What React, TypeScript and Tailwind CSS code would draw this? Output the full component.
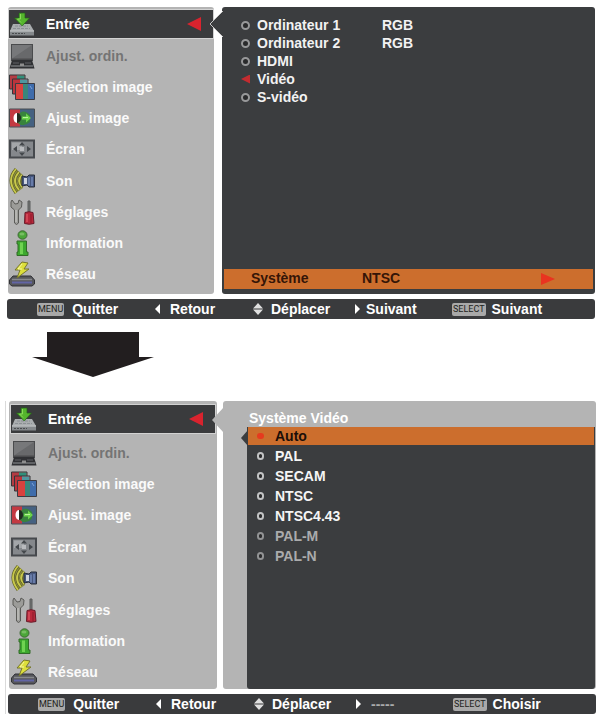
import type { ReactNode } from "react";

const InputIcon = () => (
  <svg viewBox="0 0 26 26" className="h-[26px] w-[26px]" aria-hidden="true">
    <path d="M4 13H21L25 20H1Z" fill="#a9adaf" />
    <path d="M6 15H19M4 17.500H21" stroke="#8b9094" strokeWidth="1" strokeDasharray="3 1" />
    <path d="M1 19.500H25V24.500H1Z" fill="#85898c" />
    <path d="M1 20H25" stroke="#d0d3d4" />
    <path d="M3 22.500H16" stroke="#4b4e50" strokeDasharray="2 1" />
    <path d="M10 2H16V7H20.500L13.200 15L5.500 7H10Z" fill="#55b52d" stroke="#24611a" strokeWidth="0.700" />
    <path d="M11.500 3V8H8.500L12 11.500" stroke="#8bd95c" fill="none" />
  </svg>
);

const LaptopIcon = () => (
  <svg viewBox="0 0 26 26" className="h-[26px] w-[26px]" aria-hidden="true">
    <path d="M2 1H24V18H2Z" fill="#4a4b4d" />
    <path d="M3 2H23V15.500H3Z" fill="#68696b" />
    <path d="M3 2H23L3 15.500Z" fill="#77787a" />
    <path d="M3 17H23L25.500 25.500H0.500Z" fill="#303134" />
    <path d="M4 20H10M16 20H22" stroke="#5f6164" strokeWidth="1" />
    <path d="M2 23H24" stroke="#606265" strokeWidth="2" />
    <path d="M11 20.500H15V23H11Z" fill="#8e8e8e" />
  </svg>
);

const PicturesIcon = () => (
  <svg viewBox="0 0 26 26" className="h-[26px] w-[26px]" aria-hidden="true">
    <path d="M0.500 1H16V15H0.500Z" fill="#b43b43" stroke="#343539" />
    <path d="M8 1.500H15.500V5H8Z" fill="#318f7a" />
    <path d="M3.500 5H19V20H3.500Z" fill="#bc343c" stroke="#343539" />
    <path d="M11 5.500H18.500V11H11Z" fill="#4f97a0" />
    <path d="M6.500 9.500H25.500V25.500H6.500Z" fill="#3f6cab" stroke="#3b3b43" />
    <path d="M7 10H14V25H7Z" fill="#d8423e" />
    <path d="M14 10H19V25H14Z" fill="#39867b" />
    <path d="M21 12L23 15" stroke="#7ba3dc" fill="none" />
  </svg>
);

const AdjustIcon = () => (
  <svg viewBox="0 0 26 26" className="h-[26px] w-[26px]" aria-hidden="true">
    <path d="M0.500 4H25.500V22H0.500Z" fill="#456181" stroke="#494c50" />
    <path d="M1 4.500H11V21.500H1Z" fill="#c33a42" />
    <path d="M9 10Q14 3 21 10V17Q14 23 9 18Z" fill="#38833d" />
    <path d="M8 8A3.500 5 0 0 0 8 18Z" fill="#fff" />
    <path d="M8 8A4 5 0 0 1 8 18Z" fill="#202b20" />
    <path d="M13 11.500H17V8.500L22 13L17 17.500V14.500H13Z" fill="#6bd34b" />
    <path d="M14 12.500H19" stroke="#b8f59a" />
  </svg>
);

const ScreenIcon = () => (
  <svg viewBox="0 0 26 26" className="h-[26px] w-[26px]" aria-hidden="true">
    <path d="M1 4.500H25V21.500H1Z" fill="#85888c" stroke="#46494d" strokeWidth="2" />
    <path d="M3 6.500H13V14H3Z" fill="#a3a6a9" />
    <path d="M4 13L8 10V16ZM22 13L18 10V16ZM13 6L10 9.500H16ZM13 20L10 16.500H16Z" fill="#44484c" />
    <path d="M11 11H15V15H11Z" fill="#b9bbbe" />
  </svg>
);

const SoundIcon = () => (
  <svg viewBox="0 0 26 26" className="h-[26px] w-[26px]" aria-hidden="true">
    <path d="M7 1Q-3 12 7 25L14 20V7Z" fill="#8c8d45" />
    <g fill="none" stroke="#5b5e21" strokeWidth="3">
      <path d="M7 1Q-3 12 7 25M10 4Q2 13 10 22M13 7Q7 13 13 19" />
    </g>
    <g fill="none" stroke="#c9c94c" strokeWidth="1.800">
      <path d="M7 1Q-3 12 7 25M10 4Q2 13 10 22M13 7Q7 13 13 19" />
    </g>
    <path d="M13 8L18 9L20 7H25.500V19H20L18 17L13 18Z" fill="#48587e" stroke="#292e3b" />
    <path d="M15 10H18V16H15Z" fill="#ced4df" />
    <path d="M20 9.500V17.500M23 9V18" stroke="#7388b8" strokeWidth="1.500" />
  </svg>
);

const ToolsIcon = () => (
  <svg viewBox="0 0 26 26" className="h-[26px] w-[26px]" aria-hidden="true">
    <path d="M3 1L6 5L9 4.500L10 1L13 3L12.500 8L9.500 11V24Q7.500 27 5.500 24V11L2 8V3Z" fill="#9c9c99" stroke="#5a5a57" />
    <path d="M7 11V23" stroke="#cfcfcb" />
    <path d="M19 2H21V13H19Z" fill="#737473" stroke="#5a5c5d" />
    <path d="M16 13.500Q20 12 24 13.500L25 24.500Q20 26 15.500 24.500Z" fill="#b8283b" stroke="#681c2a" />
    <path d="M18 15V23" stroke="#d9505f" strokeWidth="1.500" />
    <path d="M22 15V24" stroke="#8b1a2a" strokeWidth="1" />
  </svg>
);

const InfoIcon = () => (
  <svg viewBox="0 0 26 26" className="h-[26px] w-[26px]" aria-hidden="true">
    <ellipse cx="13.500" cy="5" rx="4.500" ry="4.200" fill="#4ba638" stroke="#3e6834" />
    <ellipse cx="13" cy="4" rx="2.500" ry="1.500" fill="#78bd63" />
    <path d="M8 11H17.500V22H19V25.500H8V22H9V14H8Z" fill="#3ca82e" stroke="#326b28" />
    <path d="M12.500 12.500V24" stroke="#6fd351" strokeWidth="3" />
  </svg>
);

const NetworkIcon = () => (
  <svg viewBox="0 0 26 26" className="h-[26px] w-[26px]" aria-hidden="true">
    <path d="M4 15H22L25.500 19V23L23 25H3L0.500 23V19Z" fill="#56575b" stroke="#303136" />
    <path d="M3 18.500H23" stroke="#88898d" strokeWidth="1.500" />
    <path d="M3 21.500H23" stroke="#6265a5" strokeWidth="2" />
    <path d="M13 1L6 9H11L8 17L20 8H15L19 2Z" fill="#dddf3c" stroke="#77772c" />
    <path d="M13 3L9 8H13" stroke="#f8f8a4" fill="none" />
  </svg>
);

const MENU = [
  { label: "Ajust. ordin.", icon: <LaptopIcon />, disabled: true },
  { label: "Sélection image", icon: <PicturesIcon /> },
  { label: "Ajust. image", icon: <AdjustIcon /> },
  { label: "Écran", icon: <ScreenIcon /> },
  { label: "Son", icon: <SoundIcon /> },
  { label: "Réglages", icon: <ToolsIcon /> },
  { label: "Information", icon: <InfoIcon /> },
  { label: "Réseau", icon: <NetworkIcon /> },
];

function Sidebar({ className, listClassName }: { className: string; listClassName: string }) {
  return (
    <nav aria-label="Menu" className={`flex shrink-0 flex-col rounded-[3px] bg-[#b4b4b4] ${className}`}>
      <button className="flex h-7 w-full items-center gap-[11px] bg-[#3a3b3d] pr-3 text-left text-white outline-1 outline-[#d2d2d2]">
        <InputIcon />
        <span className="flex-1">Entrée</span>
        <svg viewBox="0 0 14 14" className="h-[14px] w-[14px]" aria-hidden="true">
          <path d="M0 7L14 0V14Z" fill="#d9232e" />
        </svg>
      </button>
      <ul className={`grid flex-1 auto-rows-fr ${listClassName}`}>
        {MENU.map((item) => (
          <li key={item.label} className="flex">
            <button
              disabled={item.disabled}
              className="flex w-full items-center gap-[11px] text-left text-[#fafafa] disabled:text-[#747474]"
            >
              {item.icon}
              <span>{item.label}</span>
            </button>
          </li>
        ))}
      </ul>
    </nav>
  );
}

const Badge = ({ children }: { children: ReactNode }) => (
  <span className="rounded-[2px] bg-[#a9a9a9] px-px font-['Roboto',sans-serif] text-[9px] leading-[13px] font-normal text-[#1e1f20]">
    {children}
  </span>
);

const Left = () => (
  <svg viewBox="0 0 5 10" className="h-[10px] w-[5px]" aria-hidden="true">
    <path d="M0 5L5 0V10Z" fill="#fff" />
  </svg>
);

const Right = () => (
  <svg viewBox="0 0 5 10" className="h-[10px] w-[5px]" aria-hidden="true">
    <path d="M5 5L0 0V10Z" fill="#fff" />
  </svg>
);

const UpDown = () => (
  <svg viewBox="0 0 10 12" className="h-3 w-[10px]" aria-hidden="true">
    <path d="M0 5.500L5 0L10 5.500ZM0 6.500L5 12L10 6.500Z" fill="#e0e0e0" />
  </svg>
);

function Footer({ next, select }: { next: ReactNode; select: string }) {
  const item = "flex items-center whitespace-nowrap";
  return (
    <footer className="grid h-5 grid-cols-[118fr_98fr_102fr_97fr_143fr] rounded-[3px] bg-[#3a3b3d] pl-[30px] text-white">
      <button className={`${item} gap-2`}><Badge>MENU</Badge>Quitter</button>
      <button className={`${item} gap-[10px]`}><Left />Retour</button>
      <button className={`${item} gap-2`}><UpDown />Déplacer</button>
      <button className={`${item} gap-[6px]`}><Right />{next}</button>
      <button className={`${item} gap-[6px]`}><Badge>SELECT</Badge>{select}</button>
    </footer>
  );
}

const SOURCES = [
  { label: "Ordinateur 1", signal: "RGB" },
  { label: "Ordinateur 2", signal: "RGB" },
  { label: "HDMI" },
  { label: "Vidéo" },
  { label: "S-vidéo" },
];

const SYSTEMS = ["Auto", "PAL", "SECAM", "NTSC", "NTSC4.43", "PAL-M", "PAL-N"];

export default function App() {
  return (
    <main className="min-h-screen bg-white pt-[7px] font-['Liberation_Sans',Arial,sans-serif] text-[14px] leading-[18px] font-bold">
      <section aria-label="Entrée" className="pr-[3px] pl-[7px]">
        <div className="flex gap-2 pl-px">
          <Sidebar className="w-[206px] p-px pt-[3px] pb-1" listClassName="pt-[2px]" />
          <div className="relative flex min-h-[287px] flex-1 flex-col justify-between rounded-[3px] bg-[#3b3d3f] px-[2px] pt-[9px] pb-[5px]">
            <svg viewBox="0 0 13 26" className="absolute top-[4px] -left-[12px] h-[26px] w-[13px]" aria-hidden="true">
              <path d="M13 0L0 13L13 26Z" fill="#3b3d3f" stroke="#c9c9c9" />
              <path d="M12 1H13V25H12Z" fill="#3b3d3f" />
            </svg>
            <fieldset aria-label="Entrée">
              {SOURCES.map((source) => (
                <label key={source.label} className="flex h-[18px] items-center pl-[17px] text-[#f2f2f2]">
                  <input
                    type="radio"
                    name="source"
                    defaultChecked={source.label === "Vidéo"}
                    className="mr-[7px] h-[9px] w-[9px] appearance-none rounded-full border-2 border-[#98999a] bg-[#292a2b] checked:rounded-none checked:border-0 checked:bg-[#c32c30] checked:[clip-path:polygon(0_50%,100%_0,100%_100%)]"
                  />
                  <span className="w-[125px]">{source.label}</span>
                  {source.signal && <span>{source.signal}</span>}
                </label>
              ))}
            </fieldset>
            <button className="flex h-5 items-center bg-[#cc6e2d] pr-[38px] pl-[27px] text-left text-[#351507]">
              <span className="w-[111px] pb-[2px]">Système</span>
              <span className="flex-1 pb-[2px]">NTSC</span>
              <svg viewBox="0 0 14 12" className="h-3 w-[14px]" aria-hidden="true">
                <path d="M0 0L14 6L0 12Z" fill="#e93420" />
              </svg>
            </button>
          </div>
        </div>
        <div className="pt-[5px]">
          <Footer next="Suivant" select="Suivant" />
        </div>
      </section>

      <svg viewBox="0 0 122 45" className="mt-[13px] ml-8 h-[45px] w-[122px]" aria-hidden="true">
        <path d="M15 0H107V25H122L61 45L0 25H15Z" fill="#221e1f" />
      </svg>

      <section aria-label="Système Vidéo" className="mt-6 ml-[5px] border-l border-[#dadada] pr-[2px] pl-[2px]">
        <div className="flex gap-[6px] pl-px">
          <Sidebar className="w-[208px] p-[2px] pt-1 pb-px" listClassName="pt-1" />
          <div className="relative flex min-h-[288px] flex-1 flex-col rounded-[3px] bg-[#b4b4b4] pt-2 pr-px pl-6">
            <svg viewBox="0 0 12 26" className="absolute top-[6px] -left-[11px] h-[26px] w-3" aria-hidden="true">
              <path d="M12 0L0 13L12 26Z" fill="#b4b4b4" />
            </svg>
            <h2 className="pl-[2px] text-white">Système Vidéo</h2>
            <fieldset aria-label="Système Vidéo" className="relative flex-1 rounded-b-[3px] bg-[#3b3d3f]">
              <svg viewBox="0 0 7 16" className="absolute top-[3px] -left-[6px] h-4 w-[7px]" aria-hidden="true">
                <path d="M7 0L0 8L7 16Z" fill="#3b3d3f" />
              </svg>
              {SYSTEMS.map((system) => (
                <label
                  key={system}
                  className="flex h-5 items-center pl-[10px] text-[#f5f5f5] first-of-type:mx-px first-of-type:h-[18px] first-of-type:bg-[#cc6e2d] first-of-type:pl-[9px] first-of-type:text-[#1c0e08] has-disabled:text-[#aaabac] [&:nth-of-type(2)]:mt-px"
                >
                  <input
                    type="radio"
                    name="system"
                    defaultChecked={system === "Auto"}
                    disabled={system === "PAL-M" || system === "PAL-N"}
                    className="mr-[11px] h-2 w-[7px] appearance-none rounded-full border-2 border-[#c2c3c4] bg-[#292a2b] checked:h-[6px] checked:border-0 checked:bg-[#e63a1e] disabled:border-[#929394]"
                  />
                  <span>{system}</span>
                </label>
              ))}
            </fieldset>
          </div>
        </div>
        <div className="pt-[5px]">
          <Footer next={<span className="pl-1 text-[#a9aaab]">-----</span>} select="Choisir" />
        </div>
      </section>
    </main>
  );
}
